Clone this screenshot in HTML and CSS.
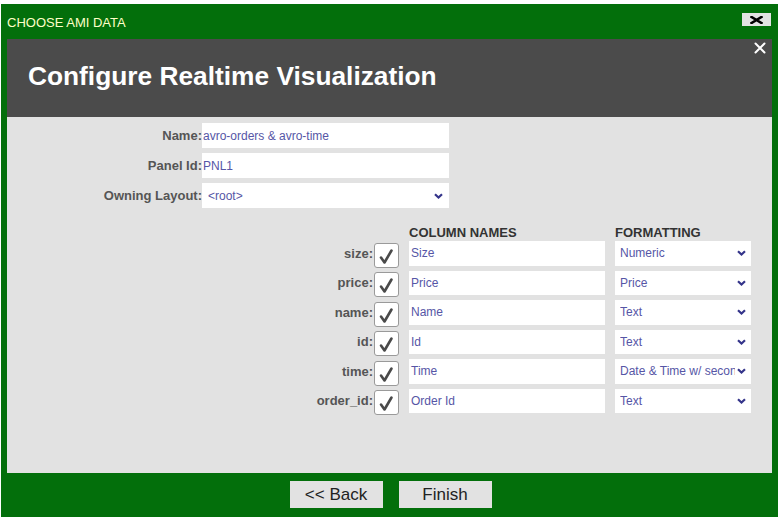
FILE: index.html
```
<!DOCTYPE html>
<html>
<head>
<meta charset="utf-8">
<link rel="stylesheet" href="styles.css">
</head>
<body>
<div class="window">
  <div class="titlebar">
    <span class="title">CHOOSE AMI DATA</span>
    <span class="close-btn"><svg width="13" height="8" viewBox="0 0 13 8"><path d="M1.5 1 L11.5 7 M11.5 1 L1.5 7" stroke="#000" stroke-width="2.6" stroke-linecap="square"/></svg></span>
  </div>
  <div class="header">
    <h1 class="heading">Configure Realtime Visualization</h1>
    <span class="header-x"><svg width="12" height="12" viewBox="0 0 12 12"><path d="M1.5 1.5 L10.5 10.5 M10.5 1.5 L1.5 10.5" stroke="#fff" stroke-width="2" stroke-linecap="round"/></svg></span>
  </div>
  <div class="content">
    <div class="form">
      <label class="flabel">Name:</label>
      <div class="field">avro-orders &amp; avro-time</div>
      <label class="flabel">Panel Id:</label>
      <div class="field">PNL1</div>
      <label class="flabel">Owning Layout:</label>
      <div class="field select"><span class="sel-text">&lt;root&gt;</span><svg class="chev" width="9" height="6" viewBox="0 0 9 6"><path d="M1 1.2 L4.5 4.5 L8 1.2" fill="none" stroke="#34348a" stroke-width="2.2"/></svg></div>
    </div>
    <div class="table">
      <div class="thead">
        <span class="th th-name">COLUMN NAMES</span>
        <span class="th th-fmt">FORMATTING</span>
      </div>
      <div class="rows">
        <div class="row"><span class="rlabel">size:</span><span class="check"><svg width="25" height="25" viewBox="0 0 25 25"><path d="M7 14.5 L10.5 19.5 L17.5 7.5" fill="none" stroke="#4a4a4a" stroke-width="2.6" stroke-linejoin="round" stroke-linecap="round"/></svg></span><div class="field cname">Size</div><div class="field select fmt"><span class="sel-text">Numeric</span><svg class="chev" width="9" height="6" viewBox="0 0 9 6"><path d="M1 1.2 L4.5 4.5 L8 1.2" fill="none" stroke="#34348a" stroke-width="2.2"/></svg></div></div>
        <div class="row"><span class="rlabel">price:</span><span class="check"><svg width="25" height="25" viewBox="0 0 25 25"><path d="M7 14.5 L10.5 19.5 L17.5 7.5" fill="none" stroke="#4a4a4a" stroke-width="2.6" stroke-linejoin="round" stroke-linecap="round"/></svg></span><div class="field cname">Price</div><div class="field select fmt"><span class="sel-text">Price</span><svg class="chev" width="9" height="6" viewBox="0 0 9 6"><path d="M1 1.2 L4.5 4.5 L8 1.2" fill="none" stroke="#34348a" stroke-width="2.2"/></svg></div></div>
        <div class="row"><span class="rlabel">name:</span><span class="check"><svg width="25" height="25" viewBox="0 0 25 25"><path d="M7 14.5 L10.5 19.5 L17.5 7.5" fill="none" stroke="#4a4a4a" stroke-width="2.6" stroke-linejoin="round" stroke-linecap="round"/></svg></span><div class="field cname">Name</div><div class="field select fmt"><span class="sel-text">Text</span><svg class="chev" width="9" height="6" viewBox="0 0 9 6"><path d="M1 1.2 L4.5 4.5 L8 1.2" fill="none" stroke="#34348a" stroke-width="2.2"/></svg></div></div>
        <div class="row"><span class="rlabel">id:</span><span class="check"><svg width="25" height="25" viewBox="0 0 25 25"><path d="M7 14.5 L10.5 19.5 L17.5 7.5" fill="none" stroke="#4a4a4a" stroke-width="2.6" stroke-linejoin="round" stroke-linecap="round"/></svg></span><div class="field cname">Id</div><div class="field select fmt"><span class="sel-text">Text</span><svg class="chev" width="9" height="6" viewBox="0 0 9 6"><path d="M1 1.2 L4.5 4.5 L8 1.2" fill="none" stroke="#34348a" stroke-width="2.2"/></svg></div></div>
        <div class="row"><span class="rlabel">time:</span><span class="check"><svg width="25" height="25" viewBox="0 0 25 25"><path d="M7 14.5 L10.5 19.5 L17.5 7.5" fill="none" stroke="#4a4a4a" stroke-width="2.6" stroke-linejoin="round" stroke-linecap="round"/></svg></span><div class="field cname">Time</div><div class="field select fmt"><span class="sel-text">Date &amp; Time w/ seconds</span><svg class="chev" width="9" height="6" viewBox="0 0 9 6"><path d="M1 1.2 L4.5 4.5 L8 1.2" fill="none" stroke="#34348a" stroke-width="2.2"/></svg></div></div>
        <div class="row"><span class="rlabel">order_id:</span><span class="check"><svg width="25" height="25" viewBox="0 0 25 25"><path d="M7 14.5 L10.5 19.5 L17.5 7.5" fill="none" stroke="#4a4a4a" stroke-width="2.6" stroke-linejoin="round" stroke-linecap="round"/></svg></span><div class="field cname">Order Id</div><div class="field select fmt"><span class="sel-text">Text</span><svg class="chev" width="9" height="6" viewBox="0 0 9 6"><path d="M1 1.2 L4.5 4.5 L8 1.2" fill="none" stroke="#34348a" stroke-width="2.2"/></svg></div></div>
      </div>
    </div>
  </div>
  <div class="footer">
    <button class="btn">&lt;&lt; Back</button>
    <button class="btn">Finish</button>
  </div>
</div>
</body>
</html>
```
FILE: styles.css
```
* { box-sizing: border-box; }
html, body {
  margin: 0;
  padding: 0;
  background: #ffffff;
  width: 780px;
  height: 517px;
  overflow: hidden;
  font-family: "Liberation Sans", Arial, sans-serif;
}
body {
  padding: 4px 0 0 1px;
}
.window {
  width: 777px;
  height: 513px;
  background: #036f0b;
  display: flex;
  flex-direction: column;
}
.titlebar {
  height: 35px;
  display: flex;
  justify-content: space-between;
  align-items: flex-start;
  padding: 0 7px 0 6px;
}
.title {
  font-size: 13px;
  line-height: 15px;
  color: #ffffc8;
  margin-top: 11px;
}
.close-btn {
  width: 29px;
  height: 13px;
  margin-top: 9px;
  background: #e3e3e3;
  display: flex;
  align-items: center;
  justify-content: center;
}
.close-btn svg { display: block; }
.header {
  height: 78px;
  margin: 0 6px;
  background: #4b4b4b;
  display: flex;
  justify-content: space-between;
  align-items: flex-start;
  padding: 0 6px 0 21px;
}
.heading {
  margin: 22px 0 0 0;
  font-size: 26.3px;
  line-height: 30px;
  font-weight: bold;
  color: #ffffff;
}
.header-x {
  margin-top: 3px;
}
.header-x svg { display: block; }
.content {
  height: 356px;
  margin: 0 6px;
  background: #e2e2e2;
  padding-top: 6px;
}
.form {
  display: grid;
  grid-template-columns: 195px 247px;
  grid-auto-rows: 25px;
  row-gap: 5px;
}
.flabel {
  font-size: 13px;
  font-weight: bold;
  color: #555555;
  text-align: right;
  line-height: 25px;
  white-space: nowrap;
}
.field {
  background: #ffffff;
  font-size: 12px;
  color: #5656a6;
  display: flex;
  align-items: center;
  padding-left: 1px;
  white-space: nowrap;
  overflow: hidden;
}
.select {
  padding-left: 6px;
  padding-right: 6px;
  justify-content: space-between;
}
.sel-text {
  overflow: hidden;
  white-space: nowrap;
  flex: 1;
  min-width: 0;
}
.chev {
  flex: none;
  display: block;
  margin-left: 2px;
}
.table {
  margin-top: 17px;
}
.thead {
  height: 16px;
  display: flex;
  padding-left: 402px;
}
.th {
  font-size: 13px;
  line-height: 15px;
  font-weight: bold;
  color: #333333;
}
.th-name { width: 206px; }
.rows {
  display: flex;
  flex-direction: column;
  gap: 5px;
}
.row {
  height: 24.5px;
  display: flex;
  align-items: center;
}
.rlabel {
  width: 366px;
  text-align: right;
  font-size: 13px;
  font-weight: bold;
  color: #555555;
}
.check {
  width: 25px;
  height: 25px;
  margin-left: 1px;
  margin-top: 4px;
  background: #ffffff;
  border: 1px solid #9a9a9a;
  border-radius: 3px;
  flex: none;
  position: relative;
}
.check svg {
  display: block;
  position: absolute;
  left: -1px;
  top: -1px;
}
.cname {
  width: 196px;
  height: 100%;
  margin-left: 10px;
  padding-left: 2px;
}
.fmt {
  width: 136px;
  height: 100%;
  margin-left: 10px;
  padding-left: 5px;
  padding-right: 5px;
}
.footer {
  flex: 1;
  display: flex;
  justify-content: center;
  align-items: flex-start;
  gap: 16px;
  padding-top: 8px;
  padding-left: 2px;
}
.btn {
  width: 93px;
  height: 27px;
  border: none;
  background: #e2e2e2;
  font-family: "Liberation Sans", Arial, sans-serif;
  font-size: 17px;
  color: #222222;
  padding: 0;
}
```
